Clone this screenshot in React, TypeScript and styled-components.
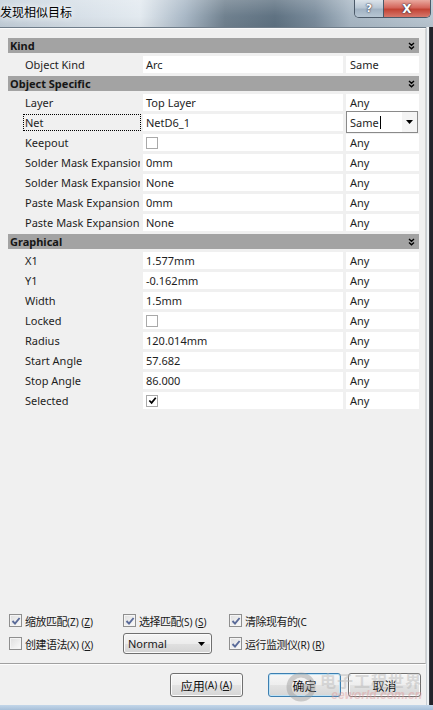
import React from "react";
import styled, { createGlobalStyle } from "styled-components";

const GlobalStyle = createGlobalStyle`
  html, body {
    margin: 0;
    padding: 0;
  }
  body {
    width: 433px;
    height: 710px;
    overflow: hidden;
    background: #f0f0f0;
    font-family: "Noto Sans", "Noto Sans CJK SC", sans-serif;
    color: #1e1e1e;
  }
`;

const Window = styled.div`
  width: 433px;
  height: 710px;
  display: flex;
  flex-direction: column;
`;

const TitleBar = styled.div`
  height: 27px;
  flex: none;
  display: flex;
  justify-content: space-between;
  align-items: flex-start;
  background:
    linear-gradient(to bottom, rgba(255, 255, 255, 0.18), rgba(255, 255, 255, 0) 60%, rgba(0, 0, 0, 0.04)),
    linear-gradient(
      to right,
      #c3cfda 0px,
      #d7e0e8 80px,
      #e3eaf0 140px,
      #a9b8c6 185px,
      #70818f 225px,
      #5f7282 275px,
      #7a8c9c 315px,
      #a8b7c4 350px,
      #bac7d2 433px
    );
`;

const Title = styled.div`
  padding-top: 4px;
  font-family: "Noto Sans CJK SC", sans-serif;
  font-size: 12px;
  line-height: 16px;
  color: #000;
  text-shadow: 0 0 6px #fff, 0 0 10px #fff;
`;

const CaptionButtons = styled.div`
  display: flex;
  margin-right: 2px;
  border: 1px solid #4b5968;
  border-top: none;
  border-radius: 0 0 5px 5px;
  overflow: hidden;
`;

const CaptionButton = styled.div<{ $close?: boolean }>`
  width: ${(p) => (p.$close ? 46 : 28)}px;
  height: 17px;
  display: flex;
  align-items: center;
  justify-content: center;
  font-family: "DejaVu Sans", sans-serif;
  font-weight: bold;
  font-size: ${(p) => (p.$close ? 12 : 11)}px;
  color: #fff;
  text-shadow: 0 0 2px #334, 0 0 1px #223;
  border-left: ${(p) => (p.$close ? "1px solid #4b5968" : "none")};
  background: ${(p) =>
    p.$close
      ? "linear-gradient(to bottom, #e9a99f 0%, #d4665b 45%, #c24334 55%, #d6786c 100%)"
      : "linear-gradient(to bottom, #dbe3ea 0%, #b9c7d4 45%, #a2b3c3 55%, #b7c6d3 100%)"};
`;

const Middle = styled.div`
  flex: 1;
  display: flex;
  min-height: 0;
`;

const Client = styled.div`
  flex: 1;
  display: flex;
  flex-direction: column;
  background: #f0f0f0;
  border-top: 1px solid #6f7d8a;
`;

const RightFrame = styled.div`
  width: 7px;
  flex: none;
  background: linear-gradient(to right, #c9cfd4 0 1px, #eef1f3 1px 3px, #3c3d44 3px 4px, #22232a 4px);
`;

const Panel = styled.div`
  flex: 1;
  display: flex;
  flex-direction: column;
  padding: 9px 0 0 8px;
  border-top: 1px solid #fbfbfb;
  border-right: 1px solid #d2d2d2;
  border-bottom: 1px solid #a0a0a0;
`;

const Grid = styled.div`
  width: 411px;
  display: flex;
  flex-direction: column;
  gap: 3px;
`;

const Band = styled.div`
  height: 15px;
  display: flex;
  align-items: center;
  justify-content: space-between;
  padding: 0 4px 0 2px;
  background: #a3a3a3;
  font-size: 11px;
  font-weight: bold;
  color: #161616;
`;

const Row = styled.div`
  height: 17px;
  display: flex;
`;

const Label = styled.div`
  width: 135px;
  flex: none;
  box-sizing: border-box;
  padding: 0 2px 0 15px;
`;

const LabelText = styled.div<{ $focused?: boolean }>`
  height: 17px;
  box-sizing: border-box;
  padding-left: 1px;
  border: 1px dotted ${(p) => (p.$focused ? "#000" : "transparent")};
  font-size: 11px;
  line-height: 15px;
  white-space: nowrap;
  overflow: hidden;
`;

const Value = styled.div`
  width: 200px;
  flex: none;
  margin-right: 3px;
  box-sizing: border-box;
  padding-left: 3px;
  background: #fff;
  font-size: 11px;
  line-height: 17px;
  white-space: nowrap;
  display: flex;
  align-items: center;
`;

const Mode = styled.div`
  width: 73px;
  flex: none;
  box-sizing: border-box;
  padding-left: 4px;
  background: #fff;
  font-size: 11px;
  line-height: 17px;
`;

const Combo = styled.div`
  width: 72px;
  flex: none;
  margin: -3px 0 -2px;
  box-sizing: border-box;
  display: flex;
  align-items: center;
  border: 1px solid #8a8a8a;
  background: #fff;
  font-size: 11px;
  line-height: 17px;
`;

const ComboText = styled.span`
  flex: 1;
  padding-left: 3px;
  display: flex;
  align-items: center;
`;

const Caret = styled.span`
  width: 1px;
  height: 13px;
  background: #000;
  margin-left: 1px;
`;

const ComboArrow = styled.span`
  width: 15px;
  height: 100%;
  display: flex;
  align-items: center;
  justify-content: center;
  background: #f4f4f4;
`;

const GridCheck = styled.span`
  width: 12px;
  height: 12px;
  box-sizing: border-box;
  border: 1px solid #a9a9a9;
  background: #fff;
  display: flex;
  align-items: center;
  justify-content: center;
`;

const Options = styled.div`
  margin-top: auto;
  padding: 0 0 9px 1px;
  display: grid;
  grid-template-columns: 114px 106px auto;
  grid-auto-rows: 21px;
  row-gap: 2px;
`;

const Option = styled.div`
  display: flex;
  align-items: center;
  white-space: nowrap;
  overflow: hidden;
`;

const WinCheck = styled.span`
  width: 13px;
  height: 13px;
  flex: none;
  box-sizing: border-box;
  border: 1px solid #8f8f8f;
  background: linear-gradient(135deg, #dedede, #fbfbfb);
  box-shadow: inset 0 0 0 1px #f4f4f4;
  display: flex;
  align-items: center;
  justify-content: center;
  margin-right: 3px;
`;

const OptionText = styled.span`
  font-family: "Noto Sans CJK SC", sans-serif;
  font-size: 11px;
  letter-spacing: -0.5px;
  color: #1a1a1a;
`;

const Mnemonic = styled.span`
  font-family: "Noto Sans", sans-serif;
  font-size: 10px;
  letter-spacing: 0;
  color: #1a1a1a;
`;

const Select = styled.div`
  width: 89px;
  height: 21px;
  box-sizing: border-box;
  border: 1px solid #707070;
  border-radius: 3px;
  background: linear-gradient(to bottom, #f5f5f5 0%, #ececec 50%, #e0e0e0 51%, #d4d4d4 100%);
  box-shadow: inset 0 0 0 1px #fbfbfb;
  display: flex;
  align-items: center;
  justify-content: space-between;
  padding: 0 6px 0 4px;
  font-size: 11px;
  color: #1a1a1a;
`;

const ButtonBar = styled.div`
  height: 41px;
  flex: none;
  position: relative;
  display: flex;
  justify-content: flex-end;
  align-items: flex-start;
  padding: 8px 5px 0 0;
  box-sizing: border-box;
  border-top: 1px solid #fdfdfd;
`;

const Button = styled.div<{ $gap: number; $default?: boolean }>`
  width: 73px;
  height: 24px;
  margin-left: ${(p) => p.$gap}px;
  box-sizing: border-box;
  display: flex;
  align-items: center;
  justify-content: center;
  border: 1px solid ${(p) => (p.$default ? "#3c7fb1" : "#707070")};
  border-radius: 3px;
  background: linear-gradient(to bottom, #f6f6f6 0%, #eeeeee 50%, #e3e3e3 51%, #d6d6d6 100%);
  box-shadow: inset 0 0 0 1px ${(p) => (p.$default ? "#bfe2f5" : "#fcfcfc")};
  font-family: "Noto Sans CJK SC", sans-serif;
  font-size: 12px;
  color: #111;
`;

const Watermark = styled.div`
  position: absolute;
  right: 4px;
  top: 6px;
  display: flex;
  align-items: center;
  gap: 4px;
  opacity: 0.45;
  pointer-events: none;
`;

const WatermarkText = styled.div`
  display: flex;
  flex-direction: column;
  align-items: flex-end;
`;

const WatermarkCn = styled.span`
  font-family: "Noto Sans CJK SC", sans-serif;
  font-size: 16px;
  font-weight: bold;
  letter-spacing: 1px;
  line-height: 18px;
  color: #b5b5b5;
`;

const WatermarkEn = styled.span`
  font-family: "Liberation Sans", sans-serif;
  font-size: 12px;
  font-style: italic;
  font-weight: bold;
  line-height: 13px;
  color: #e09a9a;
`;

const BottomFrame = styled.div`
  height: 5px;
  flex: none;
  background: linear-gradient(to bottom, #c3d6e9, #a7c0d9);
`;

const Chevrons = () => (
  <svg width="7" height="8" viewBox="0 0 7 8">
    <path d="M1 1 L3.5 3.3 L6 1 M1 4.5 L3.5 6.8 L6 4.5" fill="none" stroke="#000" strokeWidth="1.4" />
  </svg>
);

const Tick = ({ color, size }: { color: string; size: number }) => (
  <svg width={size} height={size} viewBox="0 0 10 10">
    <path d="M1.5 5 L4 7.6 L8.6 2" fill="none" stroke={color} strokeWidth="1.9" />
  </svg>
);

const DownArrow = () => (
  <svg width="7" height="4" viewBox="0 0 7 4">
    <path d="M0 0 H7 L3.5 4 Z" fill="#000" />
  </svg>
);

type RowData = {
  label: string;
  value?: string;
  check?: boolean;
  mode: string;
  focused?: boolean;
  combo?: boolean;
};

const sections: { title: string; rows: RowData[] }[] = [
  { title: "Kind", rows: [{ label: "Object Kind", value: "Arc", mode: "Same" }] },
  {
    title: "Object Specific",
    rows: [
      { label: "Layer", value: "Top Layer", mode: "Any" },
      { label: "Net", value: "NetD6_1", mode: "Same", focused: true, combo: true },
      { label: "Keepout", check: false, mode: "Any" },
      { label: "Solder Mask Expansion", value: "0mm", mode: "Any" },
      { label: "Solder Mask Expansion", value: "None", mode: "Any" },
      { label: "Paste Mask Expansion", value: "0mm", mode: "Any" },
      { label: "Paste Mask Expansion", value: "None", mode: "Any" },
    ],
  },
  {
    title: "Graphical",
    rows: [
      { label: "X1", value: "1.577mm", mode: "Any" },
      { label: "Y1", value: "-0.162mm", mode: "Any" },
      { label: "Width", value: "1.5mm", mode: "Any" },
      { label: "Locked", check: false, mode: "Any" },
      { label: "Radius", value: "120.014mm", mode: "Any" },
      { label: "Start Angle", value: "57.682", mode: "Any" },
      { label: "Stop Angle", value: "86.000", mode: "Any" },
      { label: "Selected", check: true, mode: "Any" },
    ],
  },
];

const Mn = ({ k }: { k: string }) => (
  <Mnemonic>
    ({k}) (<u>{k}</u>)
  </Mnemonic>
);

const WinOption = ({ checked, children }: { checked: boolean; children: React.ReactNode }) => (
  <Option>
    <WinCheck>{checked && <Tick color="#5a6b99" size={10} />}</WinCheck>
    <OptionText>{children}</OptionText>
  </Option>
);

export default function App() {
  return (
    <Window>
      <GlobalStyle />
      <TitleBar>
        <Title>发现相似目标</Title>
        <CaptionButtons>
          <CaptionButton>?</CaptionButton>
          <CaptionButton $close>X</CaptionButton>
        </CaptionButtons>
      </TitleBar>
      <Middle>
        <Client>
          <Panel>
            <Grid>
              {sections.map((s) => (
                <React.Fragment key={s.title}>
                  <Band>
                    <span>{s.title}</span>
                    <Chevrons />
                  </Band>
                  {s.rows.map((r, i) => (
                    <Row key={i}>
                      <Label>
                        <LabelText $focused={r.focused}>{r.label}</LabelText>
                      </Label>
                      <Value>
                        {r.check === undefined ? (
                          r.value
                        ) : (
                          <GridCheck>{r.check && <Tick color="#000" size={9} />}</GridCheck>
                        )}
                      </Value>
                      {r.combo ? (
                        <Combo>
                          <ComboText>
                            {r.mode}
                            <Caret />
                          </ComboText>
                          <ComboArrow>
                            <DownArrow />
                          </ComboArrow>
                        </Combo>
                      ) : (
                        <Mode>{r.mode}</Mode>
                      )}
                    </Row>
                  ))}
                </React.Fragment>
              ))}
            </Grid>
            <Options>
              <WinOption checked>
                缩放匹配<Mn k="Z" />
              </WinOption>
              <WinOption checked>
                选择匹配<Mn k="S" />
              </WinOption>
              <WinOption checked>
                清除现有的<Mnemonic>(C</Mnemonic>
              </WinOption>
              <WinOption checked={false}>
                创建语法<Mn k="X" />
              </WinOption>
              <Option>
                <Select>
                  <span>Normal</span>
                  <DownArrow />
                </Select>
              </Option>
              <WinOption checked>
                运行监测仪<Mn k="R" />
              </WinOption>
            </Options>
          </Panel>
          <ButtonBar>
            <Button $gap={0}>
              应用<Mn k="A" />
            </Button>
            <Button $gap={25} $default>
              确定
            </Button>
            <Button $gap={7}>取消</Button>
            <Watermark>
              <svg width="30" height="30" viewBox="0 0 30 30">
                <circle cx="15" cy="15" r="12" fill="none" stroke="#9a9a9a" strokeWidth="5" />
                <rect x="15" y="12" width="14" height="6" fill="#9a9a9a" />
              </svg>
              <WatermarkText>
                <WatermarkCn>电子工程世界</WatermarkCn>
                <WatermarkEn>eeworld.com.cn</WatermarkEn>
              </WatermarkText>
            </Watermark>
          </ButtonBar>
        </Client>
        <RightFrame />
      </Middle>
      <BottomFrame />
    </Window>
  );
}
